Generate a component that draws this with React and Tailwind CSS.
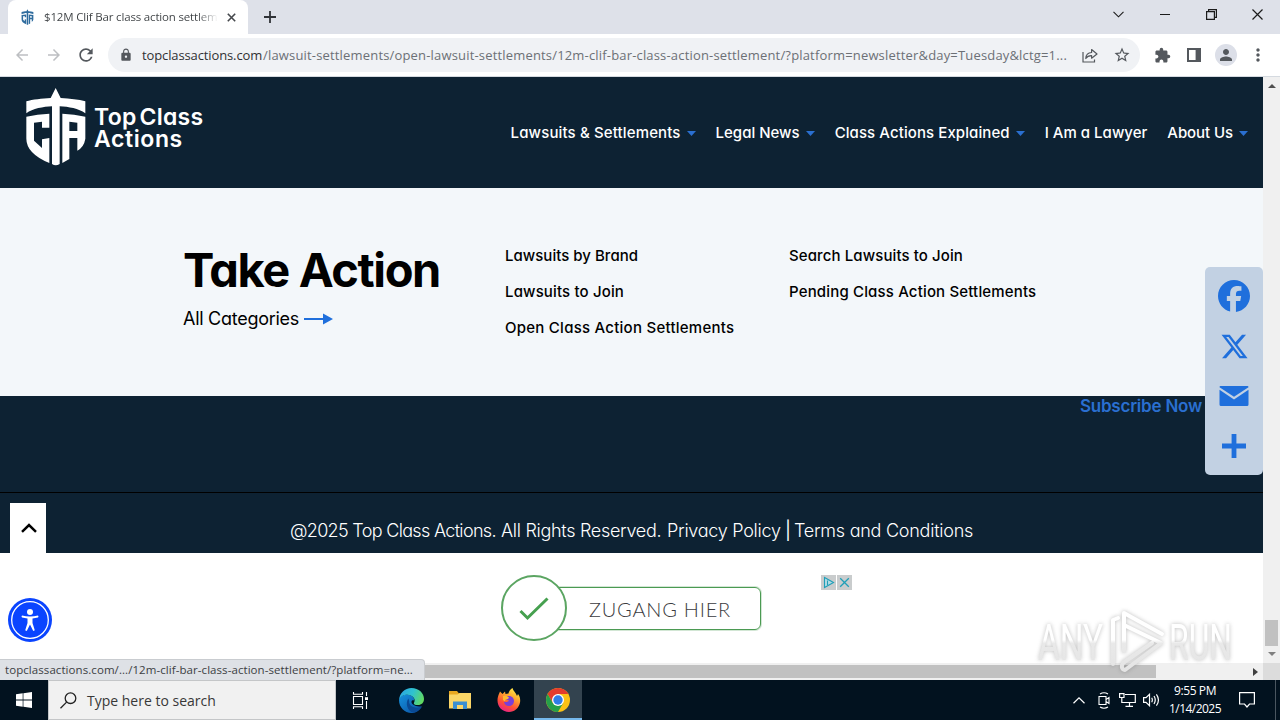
import React from 'react';
import { MdLock, MdExtension, MdPerson, MdRefresh, MdArrowBack, MdArrowForward, MdStarOutline, MdMoreVert } from 'react-icons/md';
import { FaXTwitter, FaFacebook } from 'react-icons/fa6';

const ShieldShapes = () => (
  <>
    <path d="M107 18 L122 48 C150 50 176 52 196 58 V94 C176 80 146 74 119 73 V246 Q107 254 96 246 V73 C70 74 38 80 19 94 V58 C38 52 66 50 92 48 Z" />
    <path d="M19 104 Q52 96 88 95 V137 H66 V119 L42 122 V176 L66 198 V172 L88 168 V243 Q19 214 19 170 Z" />
    <path fillRule="evenodd" d="M127 95 Q163 96 196 104 V170 Q192 195 172 206 V168 H148 V231 L127 243 Z M148 119 V147 H172 V122 Z" />
  </>
);

const Caret = () => (
  <svg className="h-[5px] w-[9px] fill-[#2a6fd0]" viewBox="0 0 9 5"><path d="M0 0H9L4.5 5Z" /></svg>
);

const NavItem = ({ label, track, caret }) => (
  <div className="flex items-center gap-[6px]">
    <span className={track}>{label}</span>
    {caret && <Caret />}
  </div>
);

const WindowControls = () => (
  <div className="flex items-center text-[#1b1b1b]">
    <svg className="mr-[36px] h-[7px] w-[11px]" viewBox="0 0 11 7" fill="none" stroke="currentColor" strokeWidth="1.1"><path d="M.5 .8 5.5 5.8 10.5 .8" /></svg>
    <svg className="mr-[36px] h-[11px] w-[10px]" viewBox="0 0 10 11" fill="none" stroke="currentColor"><path d="M0 5.5H10" /></svg>
    <svg className="mr-[35px] h-[11px] w-[11px]" viewBox="0 0 11 11" fill="none" stroke="currentColor" strokeWidth="1.2"><path d="M.6 2.6H8.4V10.4H.6ZM2.6 2.6V.6H10.4V8.4H8.4" /></svg>
    <svg className="mr-[17px] h-[11px] w-[11px]" viewBox="0 0 11 11" fill="none" stroke="currentColor" strokeWidth="1.2"><path d="M.5 .5 10.5 10.5M10.5 .5 .5 10.5" /></svg>
  </div>
);

const TabStrip = () => (
  <div className="flex h-[34px] items-stretch justify-between bg-[#dee1e9] pl-2">
    <div className="flex">
      <div className="flex w-[240px] items-center rounded-t-lg bg-white pl-[12px] pr-[12px]">
        <svg className="h-[16px] w-[15px] fill-[#2f6c9e]" viewBox="12 14 192 240"><ShieldShapes /></svg>
        <span className="ml-[9px] w-[174px] whitespace-nowrap bg-gradient-to-r from-[#3c4043] from-88% to-transparent bg-clip-text font-['Open_Sans',sans-serif] text-[11.5px] tracking-[-0.17px] text-transparent">$12M Clif Bar class action settlem</span>
        <svg className="ml-auto h-[9px] w-[9px]" viewBox="0 0 9 9" fill="none" stroke="#45484c" strokeWidth="1.6"><path d="M.8 .8 8.2 8.2M8.2 .8 .8 8.2" /></svg>
      </div>
      <svg className="ml-[16px] h-[12px] w-[12px] self-center" viewBox="0 0 12 12" fill="none" stroke="#303338" strokeWidth="1.8"><path d="M6 0V12M0 6H12" /></svg>
    </div>
    <div className="flex pb-[6px]"><WindowControls /></div>
  </div>
);

const Toolbar = () => (
  <div className="flex h-[43px] items-center border-b border-[#d5dae0] bg-white pl-[13px] pr-[14px] text-[#54585d]">
    <MdArrowBack className="text-[18px] text-[#bdbfc2]" />
    <MdArrowForward className="ml-[14px] text-[18px] text-[#bdbfc2]" />
    <MdRefresh className="ml-[13px] text-[20px]" />
    <div className="ml-[12px] flex h-[34px] w-[1032px] items-center rounded-full bg-[#f0f2f5] pl-[11px] pr-[9px]">
      <MdLock className="text-[14px]" />
      <div className="ml-[9px] flex whitespace-nowrap font-['Open_Sans',sans-serif] text-[13px] leading-[18px]">
        <span className="w-[121px] tracking-[-0.12px] text-[#303134]">topclassactions.com</span>
        <span className="tracking-[0.173px] text-[#6c7075]">/lawsuit-settlements/open-lawsuit-settlements/12m-clif-bar-class-action-settlement/?platform=newsletter&amp;day=Tuesday&amp;lctg=1...</span>
      </div>
      <svg className="ml-auto h-[15px] w-[16px]" viewBox="0 0 16 15" fill="none" stroke="currentColor" strokeWidth="1.2"><path d="M1 4V14H12.5V11.5" /><path d="M3.8 10.5C4 6.5 6 4.6 9.6 4.5V1.5L15 6 9.6 10.2V7.6C6.8 7.5 5.1 8.4 3.8 10.5Z" strokeLinejoin="round" /></svg>
      <MdStarOutline className="ml-[15px] text-[18px]" />
    </div>
    <MdExtension className="ml-[14px] text-[17px]" />
    <svg className="ml-[16px] h-[14px] w-[14px]" viewBox="0 0 14 14"><path fill="currentColor" fillRule="evenodd" d="M0 0H14V14H0ZM2 2V12H8.6V2Z" /></svg>
    <div className="ml-[14px] flex size-[22px] items-center justify-center rounded-full bg-[#dcdfe8]"><MdPerson className="text-[18px]" /></div>
    <MdMoreVert className="-mr-[2px] ml-auto text-[20px]" />
  </div>
);

const Logo = () => (
  <div className="flex text-white">
    <svg className="h-[80px] w-[62px] fill-white" viewBox="15 15 186 240"><ShieldShapes /></svg>
    <div className="ml-[7px] whitespace-nowrap pt-[19px] text-[23px] font-semibold leading-[22px]">
      <div className="tracking-[0.25px] [word-spacing:-3px]">Top Class</div>
      <div className="tracking-[0.6px]">Actions</div>
    </div>
  </div>
);

const SiteHeader = () => (
  <header className="flex h-[111px] shrink-0 justify-between bg-[#0d2233] pl-[25px] pr-[15px] pt-[10px]">
    <Logo />
    <nav className="flex h-[92px] items-center gap-[20px] whitespace-nowrap text-[15px] font-medium leading-[20px] text-white">
      <NavItem label="Lawsuits & Settlements" track="tracking-[0.135px]" caret />
      <NavItem label="Legal News" track="tracking-[0px]" caret />
      <NavItem label="Class Actions Explained" track="tracking-[0.085px]" caret />
      <NavItem label="I Am a Lawyer" track="tracking-[0.02px]" />
      <NavItem label="About Us" track="tracking-[-0.08px]" caret />
    </nav>
  </header>
);

const TakeAction = () => (
  <section className="flex h-[208px] shrink-0 bg-[#f3f7fa] pt-[50px] text-black">
    <div className="w-[505px] whitespace-nowrap pl-[183px]">
      <h2 className="text-[47px] font-bold leading-[64px] tracking-[-1.4px]">Take Action</h2>
      <div className="flex items-center text-[18px] leading-[34px] tracking-[-0.27px]">
        All Categories
        <svg className="ml-[5px] h-[12px] w-[29px] fill-[#1f6fdc]" viewBox="0 0 29 12"><path d="M0 5H19V.5L29 6 19 11.5V7H0Z" /></svg>
      </div>
    </div>
    <div className="flex w-[284px] flex-col whitespace-nowrap text-[15px] font-medium leading-[36px]">
      <span className="tracking-[0.02px]">Lawsuits by Brand</span>
      <span className="tracking-[0.147px]">Lawsuits to Join</span>
      <span className="tracking-[0.25px]">Open Class Action Settlements</span>
    </div>
    <div className="flex flex-col whitespace-nowrap text-[15px] font-medium leading-[36px]">
      <span className="tracking-[0.104px]">Search Lawsuits to Join</span>
      <span className="tracking-[0.16px]">Pending Class Action Settlements</span>
    </div>
  </section>
);

const SiteFooter = () => (
  <footer className="flex h-[157px] shrink-0 flex-col bg-[#0d2233]">
    <div className="flex h-[97px] justify-end border-b border-black pr-[61px]">
      <span className="text-[17px] font-semibold leading-[21px] tracking-[-0.22px] text-[#2a6fd0]">Subscribe Now</span>
    </div>
    <div className="flex h-[60px] items-center whitespace-nowrap pl-[290px] pt-[14px] text-[18px] font-light text-white">
      <span className="w-[211px] tracking-[-0.68px]">@2025 Top Class Actions.</span>
      <span className="w-[166px] tracking-[-0.3px]">All Rights Reserved.</span>
      <span className="w-[118px] tracking-[-0.27px]">Privacy Policy</span>
      <span className="w-[9px] font-normal">|</span>
      <span className="tracking-[-0.25px]">Terms and Conditions</span>
    </div>
  </footer>
);

const ShareBar = () => (
  <div className="absolute left-[1205px] top-[190px] flex h-[208px] w-[58px] flex-col items-center rounded-[5px] bg-[#c2d1e3] pt-[4px] text-[#1f6fdc]">
    <div className="flex h-[50px] items-center"><FaFacebook className="text-[32px]" /></div>
    <div className="flex h-[50px] items-center"><FaXTwitter className="text-[29px]" /></div>
    <div className="flex h-[50px] items-center">
      <svg className="h-[20px] w-[30px]" viewBox="0 0 30 20" fill="currentColor"><path d="M1.5 0H28.5Q29.5 0 29.5 1.2L15 10.8 .5 1.2Q.5 0 1.5 0Z" /><path d="M.5 3.8 15 13.6 29.5 3.8V18.5Q29.5 20 28 20H2Q.5 20 .5 18.5Z" /></svg>
    </div>
    <div className="flex h-[50px] items-center">
      <svg className="size-[24px]" viewBox="0 0 24 24" fill="currentColor"><path d="M9.6 0H14.4V9.6H24V14.4H14.4V24H9.6V14.4H0V9.6H9.6Z" /></svg>
    </div>
  </div>
);

const AdBanner = () => (
  <div className="flex grow items-start bg-white pl-[501px]">
    <div className="relative mt-[34px] flex h-[43px] w-[260px] items-center">
      <div className="ml-[50px] flex h-full w-[210px] items-center rounded-[6px] border-[1.5px] border-[#4b9a52] pl-[37px] ring-1 ring-[#4b9a52]/25">
        <span className="whitespace-nowrap font-['Lato',sans-serif] text-[20px] font-light tracking-[0.77px] text-[#3b3b40]">ZUGANG HIER</span>
      </div>
      <div className="absolute -top-[12px] left-0 flex size-[66px] items-center justify-center rounded-full border-2 border-[#5ba562] bg-white pt-[2px]">
        <svg className="h-[24px] w-[30px]" viewBox="0 0 30 24" fill="none" stroke="#46a04f" strokeWidth="3"><path d="M1.5 14 8.5 21 28.5 1.5" /></svg>
      </div>
    </div>
    <div className="ml-[60px] mt-[22px] flex gap-px">
      <svg className="size-[15px]" viewBox="0 0 15 15"><rect width="15" height="15" fill="#c9cccd" /><path d="M3.5 2.5V12.5L12.5 7.5ZM6.5 5.5V10" fill="#b5dbe4" stroke="#1f9fb8" strokeWidth="1.1" /></svg>
      <svg className="size-[15px]" viewBox="0 0 15 15"><rect width="15" height="15" fill="#c9cccd" /><path d="M3.2 3.2 11.8 11.8M11.8 3.2 3.2 11.8" stroke="#1f9fb8" strokeWidth="1.3" /></svg>
    </div>
  </div>
);

const Watermark = () => (
  <div className="absolute left-[1036px] top-[530px] font-['Roboto',sans-serif] drop-shadow-[0_0_2px_rgba(90,90,90,0.4)]">
    <svg className="h-[68px] w-[200px]" viewBox="0 0 200 68">
      <defs>
        <linearGradient id="wm" gradientUnits="userSpaceOnUse" x1="0" y1="0" x2="0" y2="66"><stop offset=".5" stopColor="#fff" /><stop offset=".55" stopColor="#e9e9e9" /><stop offset="1" stopColor="#e4e4e4" /></linearGradient>
      </defs>
      <g fill="none" stroke="url(#wm)" strokeWidth="4" strokeLinejoin="round" strokeLinecap="round">
        <path d="M77 57V13L82 11" />
        <path d="M88 44V6L126 27" />
        <path d="M88 44V18L125 36 89 63Q84 62 87 56L116 36" />
      </g>
      <g fill="url(#wm)" fontSize="50" fontWeight="400">
        <text x="2" y="53" textLength="65" lengthAdjust="spacingAndGlyphs">ANY</text>
        <text x="133" y="53" textLength="63" lengthAdjust="spacingAndGlyphs">RUN</text>
      </g>
    </svg>
  </div>
);

const EdgeIcon = () => (
  <svg className="size-[25px]" viewBox="0 0 24 24">
    <defs>
      <linearGradient id="edgeTop" x1="0" y1=".3" x2="1" y2=".6"><stop offset="0" stopColor="#2ba7e2" /><stop offset=".5" stopColor="#2fc2d0" /><stop offset="1" stopColor="#63da5e" /></linearGradient>
      <linearGradient id="edgeLow" x1="0" y1="0" x2="1" y2="1"><stop offset="0" stopColor="#1591dd" /><stop offset="1" stopColor="#0b4fa0" /></linearGradient>
    </defs>
    <path fill="url(#edgeLow)" d="M0 11.5C1 8 4 6.5 7.500 6.500 12 6.500 15 9 14.500 12 11 10 9.500 18 21.800 17.700 19.800 21.500 16 24 12 24 5.300 24 0 18.600 0 11.500Z" />
    <path fill="#0a4a94" d="M9 10C6 14 7.500 22 14 23.800 17.500 23.300 20.500 20.500 22 17.800 17 20.500 9 18 9.800 12.500Z" />
    <path fill="url(#edgeTop)" d="M0 11.800C.5 4.800 5.500 0 12 0 19 0 24 5 24 10.500 24 14 21.500 16.300 18.200 16.300 15.200 16.300 13.800 15.300 14.300 14.300 16.800 10.300 12.500 6.500 8 6.500 4 6.500 1 8.500 0 11.800Z" />
  </svg>
);

const FolderIcon = () => (
  <svg className="h-[18px] w-[22px]" viewBox="0 0 22 18">
    <path fill="#e9a820" d="M0 0H8L10 2.500H22V6H0Z" /><path fill="#fbd667" d="M0 3.500H8.500L10.500 2H22V17.500H0Z" />
    <path fill="#3b8fd0" d="M4 18V10.500H18V18H14V14H8V18Z" /><path fill="#fbd667" d="M8 14H14V18H8Z" />
  </svg>
);

const FirefoxIcon = () => (
  <svg className="size-[24px]" viewBox="0 0 24 24">
    <defs><linearGradient id="fox" x1=".8" y1="0" x2=".3" y2="1"><stop offset="0" stopColor="#fff04a" /><stop offset=".35" stopColor="#ffab2e" /><stop offset=".7" stopColor="#ff5035" /><stop offset="1" stopColor="#e8208a" /></linearGradient></defs>
    <path fill="url(#fox)" d="M1.500 7 3 3.500 5.500 6 8 3.500 8.500 6 11.500 5.500C12 3 13.500 1 15.500 0 16 3 19 4.500 20 8L21 6C23 8.500 23.500 11.500 23 14.500 22 20 17.500 24 12 24 5.500 24 .5 19 .5 12.500.5 10 1 8.500 1.500 7Z" />
    <path fill="#7a3fd8" d="M8 9.500C11 6.500 17 8 17 13 17 16 14.500 18 12 18 9 18 7 16 7 13.500 9 14.500 11 14 12 12.500 10.500 12.200 9 11.500 8 9.500Z" />
    <path fill="#ffb930" d="M6 8 9 7.500 12 9.500 11 11 8.500 11.500 8 13.500 6 12Z" />
  </svg>
);

const ChromeIcon = () => (
  <svg className="size-[24px]" viewBox="0 0 24 24">
    <circle cx="12" cy="12" r="12" fill="#fbc116" />
    <path fill="#e33b2e" d="M1.610 6A12 12 0 0 1 22.390 6H12L6.800 15Z" />
    <path fill="#269f4a" d="M1.610 6A12 12 0 0 0 12 24L17.200 15 12 17.500 6.800 15Z" />
    <circle cx="12" cy="12" r="6" fill="#fff" /><circle cx="12" cy="12" r="4.700" fill="#2f7de8" />
  </svg>
);

const Taskbar = () => (
  <div className="flex h-[40px] bg-[#02121f] text-white">
    <div className="flex w-[48px] items-center justify-center">
      <svg className="size-[16px]" viewBox="0 0 16 16" fill="#fff"><path d="M0 2.300 6.700 1.300V7.600H0ZM7.400 1.200 16 0V7.600H7.400ZM0 8.400H6.700V14.700L0 13.700ZM7.400 8.400H16V16L7.400 14.800Z" /></svg>
    </div>
    <div className="flex w-[288px] items-center border border-[#c4c6c8] bg-[#f1f1f1] pl-[11px]">
      <svg className="size-[17px]" viewBox="0 0 17 17" fill="none" stroke="#222" strokeWidth="1.300"><circle cx="10.500" cy="6.200" r="5.300" /><path d="M6.600 10.100.5 16.300" /></svg>
      <span className="ml-[10px] whitespace-nowrap font-['Open_Sans',sans-serif] text-[14px] text-[#383838]">Type here to search</span>
    </div>
    <div className="flex w-[48px] items-center justify-center">
      <svg className="size-[17px]" viewBox="0 0 17 17" fill="none" stroke="#fff" strokeWidth="1.100"><path d="M1.500 4.500H10.500V12.500H1.500ZM1.500 0V2.200H10.500V0M1.500 17V14.800H10.500V17M14.500 0V4M14.500 9V17" /><path d="M13 5.200H16V8H13Z" fill="#fff" stroke="none" /></svg>
    </div>
    <div className="flex w-[54px] items-center justify-center"><EdgeIcon /></div>
    <div className="flex w-[44px] items-center justify-center"><FolderIcon /></div>
    <div className="flex w-[52px] items-center justify-center pl-[2px]"><FirefoxIcon /></div>
    <div className="flex w-[48px] items-center justify-center border-b-2 border-[#76b9ed] bg-[#33434f] pt-[2px]"><ChromeIcon /></div>
    <div className="ml-auto flex items-center">
      <svg className="h-[7px] w-[12px]" viewBox="0 0 12 7" fill="none" stroke="#fff" strokeWidth="1.200"><path d="M.5 6.300 6 .9 11.500 6.300" /></svg>
      <svg className="ml-[13px] h-[17px] w-[12px]" viewBox="0 0 12 17" fill="none" stroke="#fff" strokeWidth="1.100"><path d="M1 4.500H8V12.500H1ZM8 7.500 11 5.500V11.500L8 9.500M2 2Q6-.5 10 2M2 15Q6 17.500 10 15" /></svg>
      <svg className="ml-[9px] h-[14px] w-[17px]" viewBox="0 0 17 14" fill="none" stroke="#fff" strokeWidth="1.200"><path d="M6 1.500H16.300V9.500H4M10.500 9.500V13M6.500 13.300H14M.6.6H5V4.500H.6ZM2.800 4.500V9.500H5" /></svg>
      <svg className="ml-[7px] h-[14px] w-[17px]" viewBox="0 0 17 14" fill="none" stroke="#fff" strokeWidth="1.200"><path d="M.6 4.700H3L6.500 1.300V12.700L3 9.300H.6ZM8.700 4.800Q10 7 8.700 9.200M11 3Q13.500 7 11 11M13.400 1.300Q17.500 7 13.400 12.700" /></svg>
      <div className="ml-[8px] flex w-[54px] flex-col items-center whitespace-nowrap font-['Open_Sans',sans-serif] text-[12px] leading-[18px]">
        <span className="tracking-[-0.400px]">9:55 PM</span>
        <span className="tracking-[-0.540px]">1/14/2025</span>
      </div>
      <svg className="ml-[17px] h-[16px] w-[16px]" viewBox="0 0 16 16" fill="none" stroke="#fff" strokeWidth="1.200"><path d="M.6.6H15.400V12H10.500L8 15 5.500 12H.6Z" /></svg>
      <div className="ml-[20px] mr-[4px] h-[40px] w-px bg-[#4a5660]" />
    </div>
  </div>
);

export default function App() {
  return (
    <div className="flex h-[720px] w-[1280px] flex-col overflow-hidden bg-white">
      <TabStrip />
      <Toolbar />
      <div className="relative flex h-[603px]">
        <div className="flex w-[1263px] flex-col">
          <div className="flex h-[586px] flex-col font-['Inter',sans-serif] [font-feature-settings:'cv11','ss03']">
            <SiteHeader />
            <TakeAction />
            <SiteFooter />
            <AdBanner />
          </div>
          <div className="flex h-[17px] items-center bg-[#f0f0f0] pl-[17px]">
            <div className="h-[13px] w-[1139px] bg-[#c1c1c1]" />
            <svg className="ml-auto mr-[5px] h-[8px] w-[5px] fill-[#404040]" viewBox="0 0 5 8"><path d="M0 0 5 4 0 8Z" /></svg>
          </div>
        </div>
        <div className="flex w-[17px] flex-col items-center bg-[#f0f0f0]">
          <svg className="mt-[7px] h-[4px] w-[8px] fill-[#505050]" viewBox="0 0 8 4"><path d="M0 4 4 0 8 4Z" /></svg>
          <div className="mt-[532px] h-[26px] w-[13px] bg-[#c1c1c1]" />
          <svg className="mt-[6px] h-[4px] w-[8px] fill-[#808080]" viewBox="0 0 8 4"><path d="M0 0H8L4 4Z" /></svg>
          <div className="mt-auto h-[17px] w-full bg-[#dcdcdc]" />
        </div>
        <ShareBar />
        <div className="absolute left-[10px] top-[426px] flex h-[50px] w-[36px] items-center justify-center bg-white pl-[2px]">
          <svg className="h-[10px] w-[16px]" viewBox="0 0 16 10" fill="none" stroke="#000" strokeWidth="2.500"><path d="M1 8.800 8 2 15 8.800" /></svg>
        </div>
        <svg className="absolute left-[8px] top-[521px] size-[44px]" viewBox="0 0 44 44">
          <circle cx="22" cy="22" r="22" fill="#0a44ff" /><circle cx="22" cy="22" r="18.300" fill="none" stroke="#fff" strokeWidth="1.300" />
          <circle cx="22" cy="14" r="3" fill="#fff" />
          <path fill="#fff" d="M14 17.600Q22 19.300 30 17.600Q31 18.600 30 19.400L24.500 20.500V25L26.700 32Q26 33.500 25 32.500L22 26.500 19 32.500Q18 33.500 17.300 32L19.500 25V20.500L14 19.400Q13 18.600 14 17.600Z" />
        </svg>
        <Watermark />
        <div className="absolute left-0 top-[582px] flex h-[21px] w-[425px] items-center whitespace-nowrap rounded-tr-[4px] border-r border-t border-[#c9ccd0] bg-[#dee1e6] pl-[5px] font-['Open_Sans',sans-serif] text-[11.5px] tracking-[0.070px] text-[#3c4043]">
          topclassactions.com/.../12m-clif-bar-class-action-settlement/?platform=ne...
        </div>
      </div>
      <Taskbar />
    </div>
  );
}
